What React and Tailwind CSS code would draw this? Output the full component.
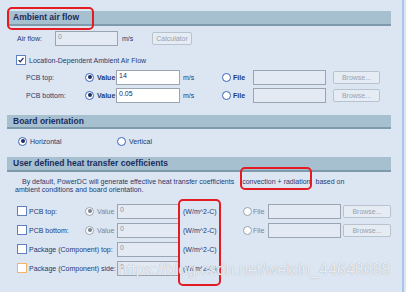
import React from "react";

const font = { fontFamily: '"Liberation Sans", Arial, sans-serif' };

const Header = ({ title, h = "h-[15px]" }) => (
  <div className={`${h} w-[384px] bg-[#a6c0d0] border-b-2 border-[#7f99ad] flex items-center pl-[6px]`}>
    <span className="text-[8.5px] font-bold text-[#1b2c5e] leading-none">{title}</span>
  </div>
);

const Radio = ({ checked, disabled }) => (
  <span
    className={`w-[9px] h-[9px] rounded-full border shrink-0 flex items-center justify-center bg-white ${
      disabled ? "border-[#9aa3ad]" : "border-[#3b63b8]"
    }`}
  >
    {checked && (
      <span className={`w-[4px] h-[4px] rounded-full ${disabled ? "bg-[#7b8290]" : "bg-[#1b2c5e]"}`} />
    )}
  </span>
);

const Check = ({ checked, orange }) => (
  <span
    className={`w-[10px] h-[10px] border shrink-0 bg-white flex items-center justify-center ${
      orange ? "border-[#f2b46a]" : "border-[#5f7fc0]"
    }`}
  >
    {checked && (
      <svg viewBox="0 0 10 10" className="w-[8px] h-[8px]">
        <path d="M2 5.2 L4 7.3 L8 2.5" fill="none" stroke="#1b2c5e" strokeWidth="1.6" />
      </svg>
    )}
  </span>
);

const Input = ({ w, value, white }) => (
  <div
    className={`${w} h-[15px] border border-[#9ba5b1] shrink-0 text-[7px] pl-[2px] pt-[1px] leading-none ${
      white ? "bg-white text-[#1b2c5e]" : "bg-[#e3eaf4] text-[#8a95a3]"
    }`}
  >
    {value}
  </div>
);

const Btn = ({ w, label }) => (
  <div className={`${w} h-[13px] border border-[#b9c3cf] bg-[#e6ecf4] rounded-[2px] shrink-0 flex items-center justify-center text-[7px] text-[#98a2ae]`}>
    {label}
  </div>
);

const Txt = ({ w, children, grey }) => (
  <span className={`${w} shrink-0 whitespace-nowrap ${grey ? "text-[#7b8492]" : "text-[#27396e]"}`}>{children}</span>
);

const RedBox = ({ pos }) => (
  <div className={`absolute ${pos} border-[2.5px] border-[#e51b24] rounded-[5px]`} />
);

const FileGroup = ({ inputW, gap }) => (
  <>
    <Radio />
    <span className="ml-[2px] w-[20px] shrink-0 text-[#27396e] font-bold">File</span>
    <Input w={inputW} />
    <div className={gap} />
    <Btn w="w-[47px]" label="Browse..." />
  </>
);

const CoefRow = ({ label, withValue, file, orange }) => (
  <div className="h-[16px] flex items-center pl-[17px]">
    <Check orange={orange} />
    <span className="ml-[2px]" />
    {withValue ? (
      <>
        <Txt w="w-[56px]">{label}</Txt>
        <Radio checked disabled />
        <span className="ml-[3px] w-[20px] shrink-0 text-[#7b8492]">Value</span>
      </>
    ) : (
      <Txt w="w-[88px]">{label}</Txt>
    )}
    <Input w="w-[63px]" value="0" />
    <span className="ml-[3px] w-[60px] shrink-0 text-[#27396e]">(W/m^2-C)</span>
    {file && (
      <>
        <Radio disabled />
        <span className="ml-[1px] w-[15px] shrink-0 text-[#7b8492]">File</span>
        <Input w="w-[73px]" />
        <div className="w-[2px]" />
        <Btn w="w-[48px]" label="Browse..." />
      </>
    )}
  </div>
);

export default function App() {
  return (
    <div style={font} className="relative w-[406px] h-[292px] bg-[#dce6f3] overflow-hidden text-[7px] leading-none">
      <div className="absolute right-[2px] top-0 bottom-0 w-[2px] bg-[#a9c7ec]" />
      <div className="pl-[7px] pt-[11px]">
        <Header title="Ambient air flow" />
        <div className="mt-[5px] h-[15px] flex items-center pl-[10px]">
          <Txt w="w-[38px]">Air flow:</Txt>
          <Input w="w-[63px]" value="0" />
          <span className="ml-[4px] w-[30px] shrink-0 text-[#27396e]">m/s</span>
          <Btn w="w-[40px]" label="Calculator" />
        </div>
        <div className="mt-[7px] h-[14px] flex items-center pl-[9px]">
          <Check checked />
          <span className="ml-[3px] text-[#27396e]">Location-Dependent Ambient Air Flow</span>
        </div>
        <div className="mt-[2px] h-[16px] flex items-center pl-[19px]">
          <Txt w="w-[59px]">PCB top:</Txt>
          <Radio checked />
          <span className="ml-[3px] w-[19px] shrink-0 text-[#27396e] font-bold">Value</span>
          <Input w="w-[64px]" value="14" white />
          <span className="ml-[3px] w-[39px] shrink-0 text-[#27396e]">m/s</span>
          <FileGroup inputW="w-[73px]" gap="w-[7px]" />
        </div>
        <div className="mt-[2px] h-[16px] flex items-center pl-[19px]">
          <Txt w="w-[59px]">PCB bottom:</Txt>
          <Radio checked />
          <span className="ml-[3px] w-[19px] shrink-0 text-[#27396e] font-bold">Value</span>
          <Input w="w-[64px]" value="0.05" white />
          <span className="ml-[3px] w-[39px] shrink-0 text-[#27396e]">m/s</span>
          <FileGroup inputW="w-[73px]" gap="w-[7px]" />
        </div>
        <div className="mt-[12px]">
          <Header title="Board orientation" h="h-[14px]" />
        </div>
        <div className="mt-[5px] h-[14px] flex items-center pl-[11px]">
          <Radio checked />
          <span className="ml-[3px] w-[87px] shrink-0 text-[#27396e]">Horizontal</span>
          <Radio />
          <span className="ml-[3px] text-[#27396e]">Vertical</span>
        </div>
        <div className="mt-[9px]">
          <Header title="User defined heat transfer coefficients" />
        </div>
        <div className="mt-[6px] pl-[8px] leading-[8px] text-[7px] text-[#27396e] whitespace-nowrap">
          <div className="flex pl-[7px]">
            <span>By default, PowerDC will generate effective heat transfer coefficients</span>
            <span className="ml-[8px]">convection + radiation</span>
            <span className="ml-[5px]">based on</span>
          </div>
          <div>ambient conditions and board orientation.</div>
        </div>
      </div>
      <div className="mt-[9px] flex flex-col gap-[3px]">
        <CoefRow label="PCB top:" withValue file />
        <CoefRow label="PCB bottom:" withValue file />
        <CoefRow label="Package (Component) top:" />
        <CoefRow label="Package (Component) side:" orange />
      </div>
      <RedBox pos="left-[7px] top-[7px] w-[87px] h-[23px]" />
      <RedBox pos="left-[240px] top-[167px] w-[72px] h-[23px]" />
      <RedBox pos="left-[178px] top-[199px] w-[43px] h-[87px]" />
      <div className="absolute left-[118px] top-[262px] text-[16px] leading-none text-white/80 [text-shadow:0_0_1px_#8a96a6] whitespace-nowrap">
        https://blog.csdn.net/weixin_44648688
      </div>
    </div>
  );
}
